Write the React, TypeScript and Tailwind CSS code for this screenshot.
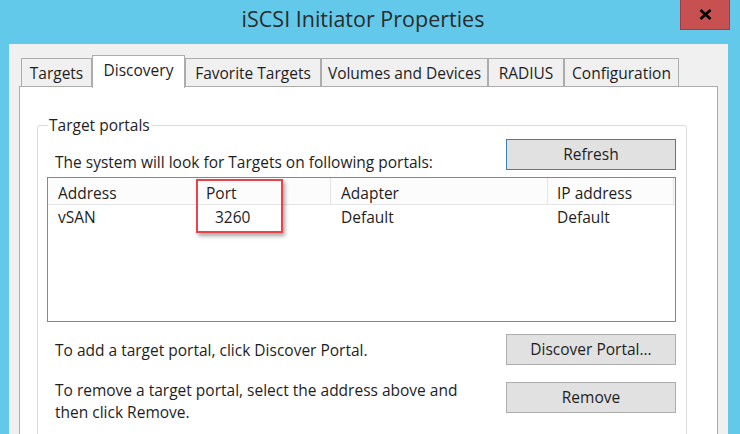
import React from "react";

const tabs = [
    { name: "Targets", w: "w-[71px]" },
    { name: "Discovery", w: "w-[93px]", active: true },
    { name: "Favorite Targets", w: "w-[136px]" },
    { name: "Volumes and Devices", w: "w-[167px]" },
    { name: "RADIUS", w: "w-[76px]" },
    { name: "Configuration", w: "w-[115px]" },
];

function WinButton({ text, focused }: { text: string; focused?: boolean }) {
    return (
        <div
            className={`w-[170px] h-[31px] shrink-0 flex items-center justify-center bg-[#e1e1e1] border ${focused ? "border-[#3c7fb1]" : "border-[#adadad]"} text-[#1e1e1e]`}
        >
            {text}
        </div>
    );
}

export default function App() {
    return (
        <div className="w-[740px] h-[434px] overflow-hidden bg-[#62c9ea] flex flex-col text-[15.5px] text-[#1e1e1e] font-['Open_Sans',sans-serif]">
            {/* title bar */}
            <div className="grid grid-cols-[1fr_auto_1fr] h-[44px] shrink-0">
                <div />
                <div className="pt-[5px] pr-[14px] text-[21.5px] leading-[28px] text-[#2b2b2b]">iSCSI Initiator Properties</div>
                <div className="flex justify-end pr-[10px]">
                    <div className="w-[50px] h-[30px] bg-[#c75050] border border-[#a33c3c] border-t-0 flex items-center justify-center">
                        <svg width="13" height="11" viewBox="0 0 13 11">
                            <path d="M1.5 1 L11.5 10 M11.5 1 L1.5 10" stroke="#000" strokeWidth="2.6" />
                        </svg>
                    </div>
                </div>
            </div>

            {/* window body */}
            <div className="ml-[9px] w-[719px] flex-1 bg-[#f0f0f0] px-[10px] pt-[11px] flex flex-col">
                <div className="flex items-end h-[31px] pl-[2px] relative z-10">
                    {tabs.map((t) =>
                        t.active ? (
                            <div
                                key={t.name}
                                className={`${t.w} h-[33px] -mb-[2px] shrink-0 bg-white border border-b-0 border-[#acacac] flex justify-center pt-[4px] leading-[20px] whitespace-nowrap`}
                            >
                                {t.name}
                            </div>
                        ) : (
                            <div
                                key={t.name}
                                className={`${t.w} h-[28px] shrink-0 bg-[#f0f0f0] border border-b-0 border-[#acacac] flex justify-center pt-[4px] leading-[20px] whitespace-nowrap`}
                            >
                                {t.name}
                            </div>
                        )
                    )}
                </div>

                <div className="flex-1 bg-white border border-[#acacac] pl-[17px] pr-[30px] pt-[38px]">
                    {/* group box */}
                    <div className="h-[400px] border border-[#dcdcdc] rounded-[3px] pl-[9px] pr-[10px]">
                        <div className="-mt-[11px] ml-[1px] w-fit bg-white px-[1px] leading-[20px]">Target portals</div>

                        <div className="mt-[4px] h-[31px] flex justify-between items-start">
                            <div className="pl-[8px] pt-[13px] leading-[20px] whitespace-nowrap">The system will look for Targets on following portals:</div>
                            <WinButton text="Refresh" focused />
                        </div>

                        <div className="relative mt-[7px] h-[145px] border border-[#828790]">
                            <div className="flex h-[27px] border-b border-[#e5e5e5] bg-[#fcfcfc] leading-[22px]">
                                <div className="w-[150px] pt-[4px] pl-[10px] border-r border-[#e5e5e5]">Address</div>
                                <div className="w-[133px] pt-[4px] pl-[8px] border-r border-[#e5e5e5]">Port</div>
                                <div className="w-[217px] pt-[4px] pl-[10px] border-r border-[#e5e5e5]">Adapter</div>
                                <div className="w-[126px] pt-[4px] pl-[9px] border-r border-[#e5e5e5]">IP address</div>
                            </div>
                            <div className="flex h-[26px] items-center">
                                <div className="w-[150px] pl-[10px]">vSAN</div>
                                <div className="w-[133px] pl-[17px]">3260</div>
                                <div className="w-[217px] pl-[10px]">Default</div>
                                <div className="w-[126px] pl-[9px]">Default</div>
                            </div>
                            <div className="absolute left-[148px] top-[1px] w-[87px] h-[54px] border-2 border-[#e8434a] shadow-[2px_3px_4px_rgba(0,0,0,0.35)]" />
                        </div>

                        <div className="mt-[12px] flex justify-between items-center">
                            <div className="pl-[8px] leading-[20px] whitespace-nowrap">To add a target portal, click Discover Portal.</div>
                            <WinButton text="Discover Portal..." />
                        </div>

                        <div className="mt-[17px] flex justify-between items-start">
                            <div className="pl-[8px] -mt-[2px] leading-[21.5px] whitespace-nowrap">
                                To remove a target portal, select the address above and
                                <br />
                                then click Remove.
                            </div>
                            <WinButton text="Remove" />
                        </div>
                    </div>
                </div>
            </div>
        </div>
    );
}
